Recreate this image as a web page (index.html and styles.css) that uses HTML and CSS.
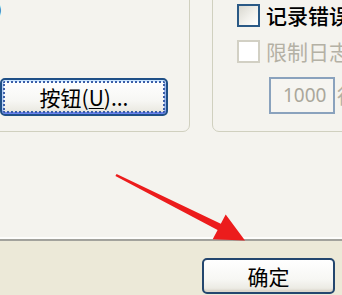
FILE: index.html
```html
<!DOCTYPE html>
<html lang="zh-CN">
<head>
<meta charset="utf-8">
<title>选项</title>
<link rel="stylesheet" href="styles.css">
</head>
<body>
<div class="window">
  <div class="tabpage">
    <div class="groups">
      <div class="group group-left">
        <div class="cut-label">)</div>
        <button class="btn btn-focus" type="button">按钮(<u>U</u>)...</button>
      </div>
      <div class="group group-right">
        <label class="check-row">
          <span class="checkbox"></span>
          <span class="check-text">记录错误</span>
        </label>
        <label class="check-row disabled">
          <span class="checkbox"></span>
          <span class="check-text">限制日志</span>
        </label>
        <div class="limit-row">
          <span class="textbox">1000</span>
          <span class="unit">行</span>
        </div>
      </div>
    </div>
  </div>
  <div class="footer">
    <button class="btn btn-ok" type="button">确定</button>
  </div>
  <svg class="arrow" width="342" height="295" viewBox="0 0 342 295" aria-hidden="true">
    <polygon fill="#ec1c1c" points="116.6,173.9 220.8,223.8 225.7,214.5 245,240.5 212.7,239.3 217.6,230.0 115.4,176.1"/>
  </svg>
</div>
</body>
</html>
```

FILE: styles.css
```css
html, body {
  margin: 0;
  padding: 0;
}

body {
  width: 342px;
  height: 295px;
  overflow: hidden;
  font-family: "Noto Sans CJK SC", "Noto Sans", sans-serif;
  color: #000;
}

.window {
  position: relative;
  width: 342px;
  height: 295px;
  display: flex;
  flex-direction: column;
  background: #ece9d8;
}

.tabpage {
  box-sizing: border-box;
  height: 241px;
  flex: none;
  overflow: hidden;
  background: #f4f3ee;
  border-bottom: 2px solid #a2a29c;
  box-shadow: inset 0 -2px 0 #fdfdfb;
}

.groups {
  display: flex;
  margin-top: -20px;
  gap: 22px;
}

.group {
  box-sizing: border-box;
  height: 152px;
  border: 1px solid #d0d0bf;
  border-radius: 7px;
  flex: none;
}

.group-left {
  width: 200px;
  margin-left: -10px;
  padding: 19px 0 0 9px;
}

.cut-label {
  height: 18px;
  line-height: 18px;
  font-size: 20px;
  font-family: "Liberation Sans", sans-serif;
  margin-left: -5px;
  color: #111;
}

.btn {
  box-sizing: border-box;
  display: flex;
  align-items: center;
  justify-content: center;
  font-family: "Noto Sans CJK SC", sans-serif;
  font-size: 21px;
  color: #000;
  border: 2px solid #1f4f86;
  border-radius: 5px;
  background: linear-gradient(to bottom, #ffffff 0%, #f7f7f4 60%, #ecebe4 88%, #d6d0c5 100%);
  padding: 0;
  line-height: 1;
}

.btn-focus {
  width: 168px;
  height: 38px;
  margin-top: 60px;
  box-shadow: inset 0 2px 0 #cee7ff, inset 0 -2px 0 #6982ee, inset 2px 0 0 #b8d0f4, inset -2px 0 0 #98b4ea;
  outline: 2px dotted #3b5fa8;
  outline-offset: -5px;
}

.btn-focus u {
  text-decoration-thickness: 1px;
  text-underline-offset: 2px;
}

.group-right {
  width: 160px;
  padding: 23px 0 0 24px;
}

.check-row {
  display: flex;
  align-items: center;
  gap: 6px;
  height: 23px;
  font-size: 21px;
  white-space: nowrap;
}

.check-row + .check-row {
  margin-top: 13px;
}

.checkbox {
  box-sizing: border-box;
  width: 23px;
  height: 23px;
  flex: none;
  border: 2px solid #2a5985;
  background: linear-gradient(135deg, #d9d8d0 0%, #f2f1ec 55%, #ffffff 100%);
}

.check-text {
  line-height: 23px;
  font-weight: 500;
}

.disabled .checkbox {
  border-color: #d2d0c4;
  background: #ffffff;
}

.disabled .check-text {
  color: #b4b1a5;
  font-weight: 400;
}

.limit-row {
  display: flex;
  align-items: center;
  gap: 2px;
  margin-top: 14px;
  margin-left: 32px;
  white-space: nowrap;
}

.textbox {
  box-sizing: border-box;
  width: 66px;
  height: 37px;
  flex: none;
  border: 2px solid #8aa2bd;
  background: #f6f5f1;
  color: #aaa79b;
  font-family: "Noto Sans", sans-serif;
  font-size: 19px;
  line-height: 33px;
  padding-left: 12px;
}

.unit {
  font-size: 20px;
  color: #b4b1a5;
}

.footer {
  flex: 1;
  display: flex;
  justify-content: flex-end;
  align-items: flex-start;
  padding: 17px 7px 0 0;
}

.btn-ok {
  width: 133px;
  height: 36px;
  border-color: #23466e;
  box-shadow: inset 0 -2px 0 #dcd7cc;
}

.arrow {
  position: absolute;
  left: 0;
  top: 0;
  pointer-events: none;
}
```
